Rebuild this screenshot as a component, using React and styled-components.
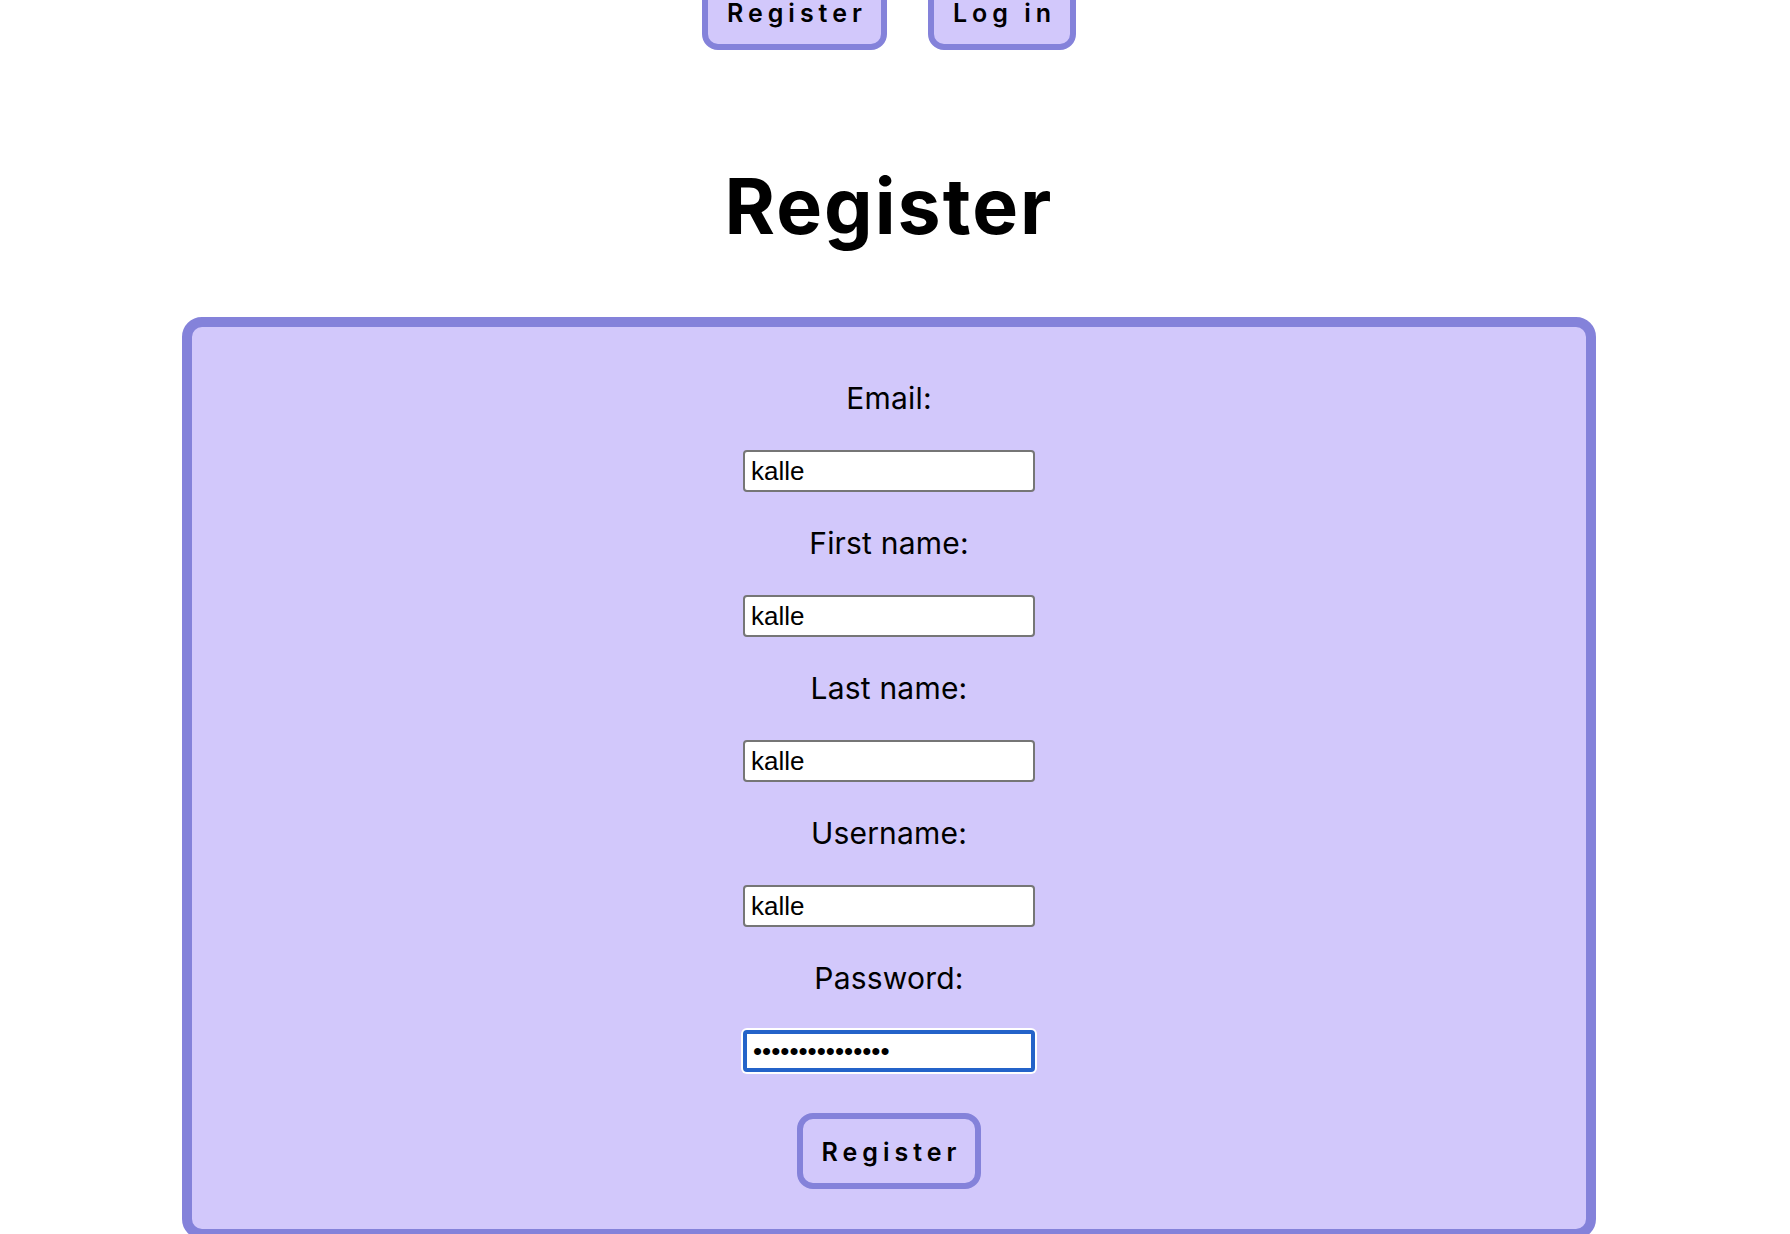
import React from "react";
import styled, { createGlobalStyle } from "styled-components";

const GlobalStyle = createGlobalStyle`
    html, body {
        margin: 0;
        padding: 0;
        background: #ffffff;
        overflow: hidden;
    }
    body {
        font-family: Inter, "Noto Sans", sans-serif;
        color: #000;
    }
`;

const lavender = "#d2c8fb";
const violet = "#8482da";

const fields = [
    { label: "Email:", type: "text", value: "kalle" },
    { label: "First name:", type: "text", value: "kalle" },
    { label: "Last name:", type: "text", value: "kalle" },
    { label: "Username:", type: "text", value: "kalle" },
    { label: "Password:", type: "password", value: "kallekallekalle", focused: true },
];

const App = () => {
    return (
        <>
            <GlobalStyle />
            <Page>
                <Nav>
                    <Button>Register</Button>
                    <Button>Log in</Button>
                </Nav>
                <Title>Register</Title>
                <Card>
                    {fields.map((f) => (
                        <Field key={f.label}>
                            <Label>{f.label}</Label>
                            <Input type={f.type} defaultValue={f.value} $focused={f.focused} />
                        </Field>
                    ))}
                    <SubmitRow>
                        <Button type="button">Register</Button>
                    </SubmitRow>
                </Card>
            </Page>
        </>
    );
};

const Page = styled.div`
    width: 1778px;
    display: flex;
    flex-direction: column;
    align-items: center;
`;

const Nav = styled.nav`
    display: flex;
    gap: 41px;
    margin-top: -26px;
`;

const Button = styled.button`
    font-family: Inter, "Noto Sans", sans-serif;
    font-size: 25px;
    font-weight: 600;
    line-height: 30px;
    letter-spacing: 0.2em;
    color: #000;
    background: ${lavender};
    border: 6px solid ${violet};
    border-radius: 16px;
    padding: 18px 14px 16px 19px;
    cursor: pointer;
`;

const Title = styled.h1`
    font-size: 77px;
    font-weight: 700;
    line-height: 92px;
    letter-spacing: 2px;
    margin: 110px 0 65px;
`;

const Card = styled.form`
    box-sizing: border-box;
    width: 1414px;
    background: ${lavender};
    border: 10px solid ${violet};
    border-radius: 20px;
    padding: 53px 0 40px;
    display: flex;
    flex-direction: column;
    align-items: center;
    gap: 33px;
`;

const Field = styled.div`
    display: flex;
    flex-direction: column;
    align-items: center;
    gap: 33px;
`;

const Label = styled.label`
    font-size: 30px;
    line-height: 37px;
    font-weight: 400;
    letter-spacing: 0.2px;
`;

const Input = styled.input`
    box-sizing: border-box;
    width: 292px;
    height: 42px;
    font-family: "Liberation Sans", Arial, sans-serif;
    font-size: 26px;
    padding: 0 6px;
    background: #fff;
    color: #000;
    border: ${(p) => (p.$focused ? "4px solid #2463c9" : "2px solid #767676")};
    border-radius: 4px;
    box-shadow: ${(p) => (p.$focused ? "0 0 0 2px #ffffff" : "none")};
    outline: none;
`;

const SubmitRow = styled.div`
    margin-top: 8px;
    display: flex;
    justify-content: center;
`;

export default App;
